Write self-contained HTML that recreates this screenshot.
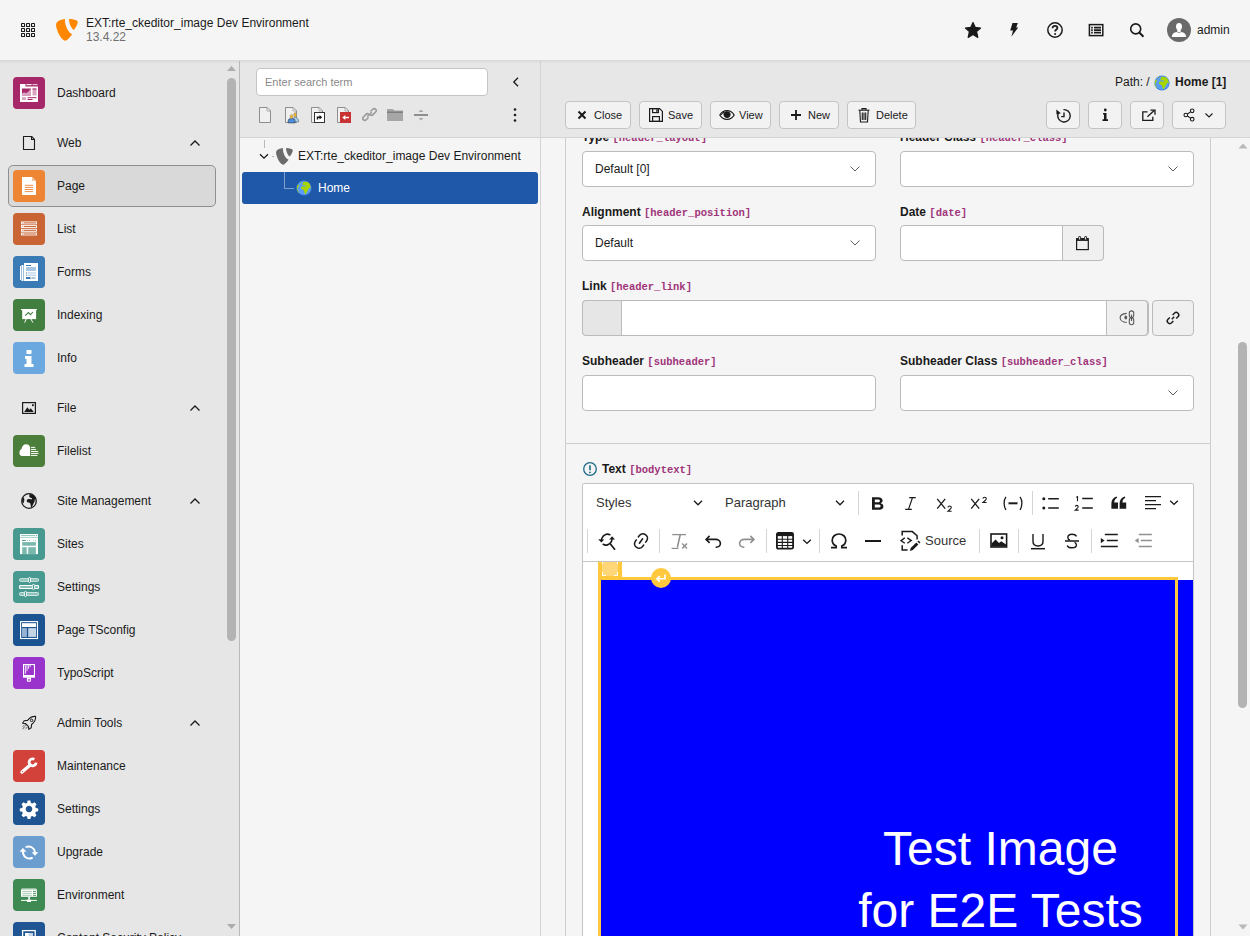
<!DOCTYPE html>
<html><head><meta charset="utf-8">
<style>
*{box-sizing:border-box;margin:0;padding:0}
html,body{width:1250px;height:936px;overflow:hidden;background:#f5f5f5;font-family:"Liberation Sans",sans-serif;font-size:12px;color:#1a1a1a}
.a{position:absolute}
svg{display:block}
/* topbar */
#top{left:0;top:0;width:1250px;height:61px;background:#f5f5f5;border-bottom:1px solid #d9d9d9;box-shadow:0 1px 2px rgba(0,0,0,.06);z-index:5}
/* sidebar */
#side{left:0;top:60px;width:240px;height:876px;background:#e6e6e6;border-right:1px solid #bababa;overflow:hidden}
.mi{position:absolute;left:13px;width:32px;height:32px;border-radius:5px}
.mt{position:absolute;left:57px;font-size:12px;color:#1a1a1a;line-height:14px}
.gi{position:absolute;left:21px;width:16px;height:16px}
.chev{position:absolute;left:189px;width:12px;height:8px}
/* tree */
#tree{left:240px;top:60px;width:301px;height:876px;background:#f5f5f5;border-right:1px solid #d4d4d4}
#treetb{left:0;top:0;width:300px;height:78px;background:#e7e7e7;border-bottom:1px solid #d4d4d4}
/* docheader */
#doch{left:541px;top:60px;width:709px;height:78px;background:#e7e7e7;border-bottom:1px solid #d4d4d4;z-index:3}
.btn{position:absolute;top:41px;height:28px;background:#f2f2f2;border:1px solid #c4c4c4;border-radius:4px;font-size:12px;line-height:26px;color:#1a1a1a}
/* content */

.lbl{position:absolute;font-weight:bold;font-size:12px;line-height:14px;white-space:nowrap}
.lbl code{font-family:"Liberation Mono",monospace;font-weight:bold;color:#a0347a;font-size:10.5px}
.inp{position:absolute;height:36px;background:#fff;border:1px solid #bbb;border-radius:4px}
</style></head>
<body>
<div id="top" class="a">
 <svg class="a" style="left:21px;top:23px" width="14" height="14" viewBox="0 0 14 14" fill="none" stroke="#1a1a1a" stroke-width="1.1"><rect x="0.55" y="0.55" width="3" height="3" rx=".4"/><rect x="5.55" y="0.55" width="3" height="3" rx=".4"/><rect x="10.55" y="0.55" width="3" height="3" rx=".4"/><rect x="0.55" y="5.55" width="3" height="3" rx=".4"/><rect x="5.55" y="5.55" width="3" height="3" rx=".4"/><rect x="10.55" y="5.55" width="3" height="3" rx=".4"/><rect x="0.55" y="10.55" width="3" height="3" rx=".4"/><rect x="5.55" y="10.55" width="3" height="3" rx=".4"/><rect x="10.55" y="10.55" width="3" height="3" rx=".4"/></svg>
 <svg class="a" style="left:56px;top:19px" width="22" height="22" viewBox="0 0 22 22">
  <path fill="#ff8700" d="M8.9 0 C5 0.6 2 1.8 0.8 3.6 C0 4.6 -0.1 6 0.2 7.5 C1.2 12.5 4.5 20 8.9 21.8 C10.6 21.6 13.6 19 16.3 15.2 C13.5 14.2 10.8 10.5 9.5 5.5 C9.1 4 8.9 2 8.9 0Z"/>
  <path fill="#ff8700" d="M13 0 L13.2 2.5 C13.6 5.5 15.6 9.6 17.8 11 C19.6 9 21.4 5.6 21.7 3.6 C21.8 2.2 21.2 1.6 20 1.2 C18 0.4 15.5 0 13 0Z"/>
 </svg>
 <div class="a" style="left:86px;top:16px;font-size:12px;line-height:14px;color:#1a1a1a;white-space:nowrap">EXT:rte_ckeditor_image Dev Environment</div>
 <div class="a" style="left:86px;top:30px;font-size:12px;line-height:14px;color:#707070">13.4.22</div>
 <svg class="a" style="left:964px;top:21px" width="18" height="18" viewBox="0 0 18 18"><path fill="#1a1a1a" stroke="#1a1a1a" stroke-width="1.2" stroke-linejoin="round" d="M9 1.6 L11.3 6.4 L16.6 7 L12.6 10.6 L13.8 16.4 L9 13.6 L4.2 16.4 L5.4 10.6 L1.4 7 L6.7 6.4Z"/></svg>
 <svg class="a" style="left:1008px;top:22px" width="12" height="16" viewBox="0 0 12 16"><path fill="#1a1a1a" d="M4.5 1 L9.8 1 L8.2 5.6 L10.2 5.6 L3.4 14.8 L5 8.4 L2.2 8.4Z"/></svg>
 <svg class="a" style="left:1047px;top:22px" width="16" height="16" viewBox="0 0 16 16" fill="none" stroke="#1a1a1a"><circle cx="8" cy="8" r="7.2" stroke-width="1.5"/><path d="M5.6 6.2 C5.6 4.6 6.7 3.8 8 3.8 C9.4 3.8 10.4 4.7 10.4 5.9 C10.4 7.5 8.1 7.6 8.1 9.6" stroke-width="1.8"/><circle cx="8.1" cy="11.9" r="1" fill="#1a1a1a" stroke="none"/></svg>
 <svg class="a" style="left:1088px;top:23px" width="16" height="14" viewBox="0 0 16 14" fill="none" stroke="#1a1a1a"><rect x="1.4" y="1.6" width="13.4" height="11" stroke-width="1.5"/><path d="M3.2 4.6h1.6M3.2 7.1h1.6M3.2 9.6h1.6M6 4.6h7M6 7.1h7M6 9.6h7" stroke-width="1.8"/></svg>
 <svg class="a" style="left:1129px;top:22px" width="16" height="16" viewBox="0 0 16 16" fill="none" stroke="#1a1a1a"><circle cx="6.7" cy="6.9" r="5" stroke-width="1.6"/><path d="M10.3 10.5 L14.5 14.7" stroke-width="2"/></svg>
 <svg class="a" style="left:1167px;top:18px" width="24" height="24" viewBox="0 0 24 24"><circle cx="12" cy="12" r="12" fill="#6a6a6a"/><ellipse cx="12" cy="8.6" rx="3" ry="3.7" fill="#fff"/><rect x="10.3" y="11" width="3.4" height="3" fill="#fff"/><path fill="#fff" d="M4.8 19 C5 16 6.8 14.6 9.6 14 C10.4 14.5 11.2 14.7 12 14.7 C12.8 14.7 13.6 14.5 14.4 14 C17.2 14.6 19 16 19.2 19Z"/></svg>
 <div class="a" style="left:1197px;top:23px;font-size:12px;line-height:14px;color:#1a1a1a">admin</div>
</div>
<div id="side" class="a">
<div class="a" style="left:8px;top:105px;width:208px;height:42px;background:#d9d9d9;border:1px solid #8f8f8f;border-radius:5px"></div>
<svg class="a" style="left:13px;top:17px" width="32" height="32" viewBox="0 0 32 32"><rect width="32" height="32" rx="4" fill="#a72869"/><rect x="7" y="9.5" width="18" height="15.5" fill="#fff"/><rect x="7" y="7" width="5.5" height="3" fill="#fff"/><rect x="13.5" y="7" width="5" height="1.2" fill="#fff"/><rect x="19.5" y="7" width="5" height="1.2" fill="#fff" opacity=".7"/><rect x="9" y="11.5" width="9" height="7" fill="#a72869"/><path d="M9 18.5 L9 16.5 L11 15.2 L13 16.2 L15.5 14.5 L18 11.5 L18 18.5Z" fill="#d9a3c0"/><rect x="19.5" y="11.5" width="4" height="7" fill="#d9a3c0"/><rect x="19.5" y="11.5" width="4" height="1" fill="#a72869"/><rect x="9" y="20.2" width="4" height="2.8" fill="#d9a3c0"/><rect x="14.5" y="20.2" width="9" height="1" fill="#a72869"/><rect x="14.5" y="22" width="5" height="1" fill="#a72869"/></svg>
<div class="a mt" style="top:17px;line-height:32px;white-space:nowrap">Dashboard</div>
<svg class="a" style="left:13px;top:110px" width="32" height="32" viewBox="0 0 32 32"><rect width="32" height="32" rx="4" fill="#ee8535"/><path d="M9 7 L19 7 L23 11 L23 25 L9 25Z" fill="#fff"/><path d="M19 7 L23 11 L19 11Z" fill="#f6c29a"/><path d="M11.8 15.3h8.4M11.8 17.4h8.4M11.8 19.5h8.4M11.8 21.6h8.4" stroke="#ee8535" stroke-width=".9"/></svg>
<div class="a mt" style="top:110px;line-height:32px;white-space:nowrap">Page</div>
<svg class="a" style="left:13px;top:153px" width="32" height="32" viewBox="0 0 32 32"><rect width="32" height="32" rx="4" fill="#c96434"/><g fill="none" stroke="#fff" stroke-width=".9"><rect x="8.5" y="8.9" width="15" height="2"/><rect x="8.5" y="12.6" width="15" height="2"/><rect x="8.5" y="16.3" width="15" height="2"/><rect x="8.5" y="20" width="15" height="2"/></g><path d="M9.5 9.9h1.3M9.5 13.6h1.3M9.5 17.3h1.3M9.5 21h1.3" stroke="#fff" stroke-width="1.1"/></svg>
<div class="a mt" style="top:153px;line-height:32px;white-space:nowrap">List</div>
<svg class="a" style="left:13px;top:196px" width="32" height="32" viewBox="0 0 32 32"><rect width="32" height="32" rx="4" fill="#3a7bb5"/><rect x="7" y="10" width="1" height="14" fill="#fff"/><rect x="8.5" y="9" width="2" height="16" fill="#fff"/><rect x="11" y="7" width="14" height="18" fill="#fff"/><rect x="13" y="9" width="5" height="1" fill="#3a7bb5"/><rect x="13" y="11" width="10" height="4" fill="#a8c5e1"/><rect x="13" y="16.5" width="1.2" height="1" fill="#3a7bb5"/><rect x="15" y="16.5" width="8" height="1" fill="#a8c5e1"/><rect x="13" y="18.7" width="1.2" height="1" fill="#3a7bb5"/><rect x="15" y="18.7" width="8" height="1" fill="#a8c5e1"/><rect x="13" y="21" width="4.5" height="2" fill="#3a7bb5"/><rect x="18.5" y="21" width="4" height="2" fill="#a8c5e1"/></svg>
<div class="a mt" style="top:196px;line-height:32px;white-space:nowrap">Forms</div>
<svg class="a" style="left:13px;top:239px" width="32" height="32" viewBox="0 0 32 32"><rect width="32" height="32" rx="4" fill="#417e3f"/><rect x="9.2" y="10" width="13.9" height="10.1" fill="#fff"/><rect x="7.9" y="10" width="16" height="1.1" fill="#fff"/><path d="M12.2 16.7 L15.4 13.6 L17.5 15.6 L19.9 13" stroke="#417e3f" stroke-width="1.1" fill="none"/><path d="M13.3 20 L11.6 23.6 M17.9 20 L19.9 23.6" stroke="#fff" stroke-width="1"/></svg>
<div class="a mt" style="top:239px;line-height:32px;white-space:nowrap">Indexing</div>
<svg class="a" style="left:13px;top:282px" width="32" height="32" viewBox="0 0 32 32"><rect width="32" height="32" rx="4" fill="#6ca8e0"/><rect x="13.5" y="8" width="5" height="4" rx=".5" fill="#fff"/><path d="M12 14 L18.5 14 L18.5 22 L20.5 22 L20.5 25 L11.5 25 L11.5 22 L13.5 22 L13.5 17 L12 17Z" fill="#fff"/></svg>
<div class="a mt" style="top:282px;line-height:32px;white-space:nowrap">Info</div>
<svg class="a" style="left:13px;top:375px" width="32" height="32" viewBox="0 0 32 32"><rect width="32" height="32" rx="4" fill="#4a7e3a"/><path d="M17.1 20.9 L9 20.9 C7.4 20.9 6.4 19.6 6.4 18 C6.4 16.4 7.3 14.6 8.5 14.1 C8.9 11.2 10.8 9.2 13.2 9.2 C15.6 9.2 17.1 10.8 17.1 13Z" fill="#fff"/><path d="M17.9 12.4h4.3M17.9 14.45h5.2M17.9 16.45h7.3M17.9 18.4h7.7M17.9 20.4h6.5" stroke="#fff" stroke-width="1"/></svg>
<div class="a mt" style="top:375px;line-height:32px;white-space:nowrap">Filelist</div>
<svg class="a" style="left:13px;top:468px" width="32" height="32" viewBox="0 0 32 32"><rect width="32" height="32" rx="4" fill="#48998f"/><rect x="7" y="6" width="18" height="20.1" fill="#fff"/><path d="M8.1 7.6h13.9" stroke="#8cc3ba" stroke-width="1"/><circle cx="23.5" cy="7.6" r=".7" fill="#48998f"/><rect x="7" y="9.3" width="18" height=".7" fill="#8cc3ba"/><path d="M9 12.4h3.8" stroke="#48998f" stroke-width="1"/><circle cx="14.5" cy="12.4" r=".5" fill="#8cc3ba"/><circle cx="16.5" cy="12.4" r=".5" fill="#8cc3ba"/><circle cx="20.5" cy="12.4" r=".5" fill="#8cc3ba"/><circle cx="22.5" cy="12.4" r=".5" fill="#8cc3ba"/><rect x="9.2" y="14.1" width="13.7" height="3.6" fill="#7ab8ae"/><rect x="9.2" y="19.2" width="4.5" height="6.9" fill="#7ab8ae"/><rect x="15.2" y="19.2" width="7.7" height="6.9" fill="#7ab8ae"/></svg>
<div class="a mt" style="top:468px;line-height:32px;white-space:nowrap">Sites</div>
<svg class="a" style="left:13px;top:511px" width="32" height="32" viewBox="0 0 32 32"><rect width="32" height="32" rx="4" fill="#48998f"/><g stroke="#fff" stroke-width=".9"><rect x="6.6" y="7.7" width="18.9" height="2.6" rx=".8" fill="#86c0b6" stroke="#e6f2f0"/><rect x="6.6" y="14.5" width="18.9" height="3" rx=".8" fill="#86c0b6" stroke-width="1.1"/><rect x="6.6" y="21.6" width="18.9" height="2.8" rx=".8" fill="#86c0b6" stroke="#e6f2f0"/><rect x="15.6" y="6.4" width="1.9" height="5" rx=".9" fill="#48998f"/><rect x="19.4" y="13.4" width="2.2" height="5" rx="1" fill="#48998f"/><rect x="11.5" y="20.5" width="2" height="5" rx=".9" fill="#48998f"/></g></svg>
<div class="a mt" style="top:511px;line-height:32px;white-space:nowrap">Settings</div>
<svg class="a" style="left:13px;top:554px" width="32" height="32" viewBox="0 0 32 32"><rect width="32" height="32" rx="4" fill="#1c5491"/><rect x="7.6" y="7.6" width="16.9" height="16.9" fill="none" stroke="#fff" stroke-width="1.1"/><rect x="9" y="9.2" width="14.1" height="3.8" fill="#fff"/><rect x="9" y="14.1" width="4.9" height="8.8" fill="#97b3d2"/><rect x="15.2" y="14.1" width="7.9" height="8.8" fill="#c5d5e6"/></svg>
<div class="a mt" style="top:554px;line-height:32px;white-space:nowrap">Page TSconfig</div>
<svg class="a" style="left:13px;top:597px" width="32" height="32" viewBox="0 0 32 32"><rect width="32" height="32" rx="4" fill="#9933cc"/><rect x="10" y="7" width="12" height="13.7" fill="#fff"/><rect x="11.1" y="8.1" width="9.8" height="9.9" fill="#9933cc"/><path d="M12.4 8.1 L12.4 16.8 M14 8.1 L14 14.2 M15.6 8.1 L15.6 11.8 M17.2 8.1 L17.2 10" stroke="#fff" stroke-width=".9" opacity=".95"/><path d="M13.9 20.7 L17.9 20.7 L17.9 23.8 C17.9 24.5 17.4 24.8 16.8 24.8 L15 24.8 C14.4 24.8 13.9 24.5 13.9 23.8Z" fill="#fff"/><rect x="15.2" y="22.1" width="1.6" height="1.6" fill="#9933cc"/></svg>
<div class="a mt" style="top:597px;line-height:32px;white-space:nowrap">TypoScript</div>
<svg class="a" style="left:13px;top:690px" width="32" height="32" viewBox="0 0 32 32"><rect width="32" height="32" rx="4" fill="#d2413a"/><path d="M23.1 12.6 A3.5 3.5 0 1 1 21.4 9.3" fill="none" stroke="#fff" stroke-width="2.8"/><path d="M17.2 14.9 L9 22.1" stroke="#fff" stroke-width="3.3" stroke-linecap="round"/><circle cx="9.6" cy="21.6" r=".65" fill="#d2413a"/></svg>
<div class="a mt" style="top:690px;line-height:32px;white-space:nowrap">Maintenance</div>
<svg class="a" style="left:13px;top:733px" width="32" height="32" viewBox="0 0 32 32"><rect width="32" height="32" rx="4" fill="#1f5592"/><path fill="#fff" fill-rule="evenodd" d="M14.6 7.5h2.8l.5 2.4 1.5.7 2.1-1.3 2 2-1.3 2.1.6 1.5 2.4.5v2.8l-2.4.5-.6 1.5 1.3 2.1-2 2-2.1-1.3-1.5.6-.5 2.4h-2.8l-.5-2.4-1.5-.6-2.1 1.3-2-2 1.3-2.1-.6-1.5-2.4-.5v-2.8l2.4-.5.6-1.5-1.3-2.1 2-2 2.1 1.3 1.5-.7Z M16 12.7 a3.3 3.3 0 1 0 0.01 0Z"/></svg>
<div class="a mt" style="top:733px;line-height:32px;white-space:nowrap">Settings</div>
<svg class="a" style="left:13px;top:776px" width="32" height="32" viewBox="0 0 32 32"><rect width="32" height="32" rx="4" fill="#6b9ecf"/><path d="M13.4 10.9 C16.8 9.8 21.2 11.2 22 16.2" fill="none" stroke="#fff" stroke-width="1.9" stroke-linecap="round"/><path d="M18.6 16.3 L25.4 16.3 L22 19.8Z" fill="#fff"/><path d="M19 22 C15.6 23.4 10.4 22 9.8 15.6" fill="none" stroke="#fff" stroke-width="1.9" stroke-linecap="round"/><path d="M6.5 15.8 L13.5 15.8 L9.9 12.1Z" fill="#fff"/></svg>
<div class="a mt" style="top:776px;line-height:32px;white-space:nowrap">Upgrade</div>
<svg class="a" style="left:13px;top:819px" width="32" height="32" viewBox="0 0 32 32"><rect width="32" height="32" rx="4" fill="#3f8a53"/><rect x="8.8" y="9.2" width="14.5" height="1.4" fill="#a9cdb1"/><rect x="8" y="10.4" width="15.9" height="7.4" fill="#fff"/><path d="M9.2 12.4h9.6M9.2 14.35h9.6M9.2 16.3h9.6" stroke="#9cc5a6" stroke-width=".9"/><path d="M20 12.4h3M20 14.35h3M20 16.3h3" stroke="#3f8a53" stroke-width=".9"/><rect x="15.3" y="17.8" width="1.6" height="2.8" fill="#fff"/><path d="M14 22.9 L14 21.2 C14 20.7 14.4 20.4 14.9 20.4 L17.2 20.4 C17.7 20.4 18.1 20.7 18.1 21.2 L18.1 22.9Z" fill="#fff"/><path d="M8 21.4h15.9" stroke="#fff" stroke-width="1"/></svg>
<div class="a mt" style="top:819px;line-height:32px;white-space:nowrap">Environment</div>
<svg class="a" style="left:13px;top:862px" width="32" height="32" viewBox="0 0 32 32"><rect width="32" height="32" rx="4" fill="#1f5592"/><rect x="9.6" y="8.6" width="12.6" height="14" fill="none" stroke="#fff" stroke-width="1.3"/><rect x="12" y="11" width="3.9" height="10" fill="#fff"/><rect x="15.9" y="11" width="4.1" height="10" fill="#c5d5e6"/></svg>
<div class="a mt" style="top:862px;line-height:32px;white-space:nowrap">Content Security Policy</div>
<svg class="a" style="left:21px;top:75px" width="16" height="16" viewBox="0 0 16 16"><path d="M2.5 1.5 L10.6 1.5 L13.5 4.4 L13.5 14.5 L2.5 14.5Z" fill="none" stroke="#1a1a1a" stroke-width="1.1" stroke-linejoin="round"/><path d="M10.5 1.6 L10.5 4.5 L13.4 4.5" fill="none" stroke="#1a1a1a" stroke-width="1.1" stroke-linejoin="round"/></svg>
<div class="a mt" style="top:67px;line-height:32px;white-space:nowrap">Web</div>
<svg class="a" style="left:189px;top:79px" width="12" height="8" viewBox="0 0 12 8"><path d="M1.5 6.5 L6 2 L10.5 6.5" fill="none" stroke="#1a1a1a" stroke-width="1.3"/></svg>
<svg class="a" style="left:21px;top:340px" width="16" height="16" viewBox="0 0 16 16"><rect x="1.6" y="2.6" width="12.8" height="10.8" fill="none" stroke="#1a1a1a" stroke-width="1.2"/><path d="M3.2 12 L6.3 7.3 L8.3 9.8 L9.8 8.3 L12.8 12Z" fill="#1a1a1a"/><rect x="11" y="4.3" width="1.8" height="1.8" fill="#1a1a1a"/></svg>
<div class="a mt" style="top:332px;line-height:32px;white-space:nowrap">File</div>
<svg class="a" style="left:189px;top:344px" width="12" height="8" viewBox="0 0 12 8"><path d="M1.5 6.5 L6 2 L10.5 6.5" fill="none" stroke="#1a1a1a" stroke-width="1.3"/></svg>
<svg class="a" style="left:21px;top:433px" width="16" height="16" viewBox="0 0 16 16"><circle cx="8" cy="8" r="7.3" fill="none" stroke="#1a1a1a" stroke-width="1.3"/><path fill="#1a1a1a" d="M8.6 1 C11 1.1 13 2.2 14.2 4 L13.6 8.4 L11.8 12 L10.4 15.2 L9.7 12.6 L9.4 10.4 L8 9.6 L6.2 9.3 L5.6 7.6 L7 6.1 L8.6 5.9 L10.6 6.5 L11 5.2 L9 4.6 L8.2 3.4 Z"/><path fill="#1a1a1a" d="M1.4 5.2 L2.9 4.4 L3.4 7 L2.6 10.2 L1.2 9.4Z"/></svg>
<div class="a mt" style="top:425px;line-height:32px;white-space:nowrap">Site Management</div>
<svg class="a" style="left:189px;top:437px" width="12" height="8" viewBox="0 0 12 8"><path d="M1.5 6.5 L6 2 L10.5 6.5" fill="none" stroke="#1a1a1a" stroke-width="1.3"/></svg>
<svg class="a" style="left:21px;top:655px" width="16" height="16" viewBox="0 0 16 16"><path d="M14.6 1.4 C11.2 1.2 8.5 2.8 6.5 5.4 L3.2 5.8 L1.6 8.2 L4.4 8.5 L7.5 11.6 L7.8 14.4 L10.2 12.8 L10.6 9.5 C13.2 7.5 14.8 4.8 14.6 1.4Z" fill="none" stroke="#1a1a1a" stroke-width="1.1" stroke-linejoin="round"/><circle cx="10.6" cy="5.4" r="1.2" fill="none" stroke="#1a1a1a" stroke-width="1"/><path d="M4.5 10.5 L1.5 14.5 M3.5 9.8 L1.8 11.6 M6.2 12.2 L4.4 14.2" stroke="#1a1a1a" stroke-width="1" stroke-dasharray="1 .8"/></svg>
<div class="a mt" style="top:647px;line-height:32px;white-space:nowrap">Admin Tools</div>
<svg class="a" style="left:189px;top:659px" width="12" height="8" viewBox="0 0 12 8"><path d="M1.5 6.5 L6 2 L10.5 6.5" fill="none" stroke="#1a1a1a" stroke-width="1.3"/></svg>
<svg class="a" style="left:226px;top:5px" width="11" height="7" viewBox="0 0 11 7"><path d="M1 6 L5.5 1 L10 6Z" fill="#acacac"/></svg>
<div class="a" style="left:227px;top:18px;width:9px;height:563px;background:#b3b3b3;border-radius:5px"></div>
<svg class="a" style="left:226px;top:863px" width="11" height="7" viewBox="0 0 11 7"><path d="M1 1 L5.5 6 L10 1Z" fill="#acacac"/></svg>
</div>
<div id="tree" class="a">
 <div id="treetb" class="a">
  <div class="a" style="left:16px;top:8px;width:232px;height:28px;background:#fff;border:1px solid #c4c4c4;border-radius:4px"></div>
  <div class="a" style="left:25px;top:15px;font-size:11px;line-height:14px;color:#8a8a8a">Enter search term</div>
  <svg class="a" style="left:270px;top:16px" width="12" height="12" viewBox="0 0 12 12"><path d="M8 1.8 L3.8 6 L8 10.2" fill="none" stroke="#1a1a1a" stroke-width="1.3"/></svg>
  <!-- toolbar icons -->
  <svg class="a" style="left:18px;top:46px" width="16" height="18" viewBox="0 0 16 18"><path d="M1.5 1.5 L9 1.5 L12.5 5 L12.5 16.5 L1.5 16.5Z" fill="#f0f0f0" stroke="#8e8e8e" stroke-width="1"/><path d="M9 1.5 L9 5 L12.5 5Z" fill="#fff" stroke="#8e8e8e" stroke-width=".7"/></svg>
  <svg class="a" style="left:44px;top:46px" width="16" height="18" viewBox="0 0 16 18"><path d="M1.5 1.5 L9 1.5 L12.5 5 L12.5 16.5 L1.5 16.5Z" fill="#f0f0f0" stroke="#8e8e8e" stroke-width="1"/><path d="M9 1.5 L9 5 L12.5 5Z" fill="#fff" stroke="#8e8e8e" stroke-width=".7"/><path d="M9.6 16.2 L9.6 12.6 C9.6 11.6 10.3 11.2 11.1 11.2 C12 11.2 13 11.6 13.4 12.6 L14.6 14.2 L14.6 15.8Z" fill="#a8d0f0" stroke="#555" stroke-width=".6"/><ellipse cx="11.1" cy="8.8" rx="1.4" ry="2.2" fill="#f2b632" stroke="#777" stroke-width=".4"/><path d="M4.2 16.9 L4.2 14.3 C4.2 13.2 5.4 12.6 7.5 12.6 C9.6 12.6 11 13.2 11 14.3 L11 16.9Z" fill="#4d8fe0" stroke="#333" stroke-width=".6"/><ellipse cx="7.5" cy="10.5" rx="1.5" ry="2.1" fill="#f2b632" stroke="#777" stroke-width=".4"/></svg>
  <svg class="a" style="left:70px;top:46px" width="16" height="18" viewBox="0 0 16 18"><path d="M1.5 1.5 L9 1.5 L12.5 5 L12.5 16.5 L1.5 16.5Z" fill="#f0f0f0" stroke="#8e8e8e" stroke-width="1"/><path d="M9 1.5 L9 5 L12.5 5Z" fill="#fff" stroke="#8e8e8e" stroke-width=".7"/><rect x="4.5" y="6.5" width="10" height="10" fill="#fff" stroke="#333" stroke-width="1"/><path d="M7.5 13.5 L7.5 11.2 L10 11.2" fill="none" stroke="#111" stroke-width="1.4"/><path d="M9.5 9 L12.2 11.2 L9.5 13.4Z" fill="#111"/></svg>
  <svg class="a" style="left:96px;top:46px" width="16" height="18" viewBox="0 0 16 18"><path d="M1.5 1.5 L9 1.5 L12.5 5 L12.5 16.5 L1.5 16.5Z" fill="#f0f0f0" stroke="#8e8e8e" stroke-width="1"/><path d="M9 1.5 L9 5 L12.5 5Z" fill="#fff" stroke="#8e8e8e" stroke-width=".7"/><rect x="4" y="6" width="11" height="11" fill="#c83232"/><path d="M13 11.5 L8.5 11.5" stroke="#fff" stroke-width="1.4"/><path d="M6.3 11.5 L9.3 9 L9.3 14Z" fill="#fff"/></svg>
  <svg class="a" style="left:122px;top:47px" width="15" height="15" viewBox="0 0 15 15" fill="none" stroke="#9a9a9a" stroke-width="1.6"><path d="M6.5 10.5 L4.2 12.8 C3.4 13.6 2.1 13.6 1.4 12.8 C0.6 12 0.6 10.8 1.4 10 L4 7.4 C4.8 6.6 6 6.6 6.8 7.4"/><path d="M8.5 4.5 L10.8 2.2 C11.6 1.4 12.9 1.4 13.6 2.2 C14.4 3 14.4 4.2 13.6 5 L11 7.6 C10.2 8.4 9 8.4 8.2 7.6"/><path d="M5.3 9.7 L9.7 5.3"/></svg>
  <svg class="a" style="left:146px;top:48px" width="18" height="14" viewBox="0 0 18 14"><path d="M1 1 L7 1 L8.5 2.5 L17 2.5 L17 13 L1 13Z" fill="#a6a6a6"/><path d="M1 3.5 L17 3.5 L17 5 L1 5Z" fill="#7e7e7e"/></svg>
  <svg class="a" style="left:173px;top:47px" width="16" height="16" viewBox="0 0 16 16"><path d="M1 8 L15 8" stroke="#7a7a7a" stroke-width="1.6"/><path d="M5.5 5 L8 2.5 L10.5 5Z M5.5 11 L8 13.5 L10.5 11Z" fill="#a8a8a8"/></svg>
  <svg class="a" style="left:272px;top:47px" width="6" height="16" viewBox="0 0 6 16"><circle cx="3" cy="2.5" r="1.3" fill="#1a1a1a"/><circle cx="3" cy="8" r="1.3" fill="#1a1a1a"/><circle cx="3" cy="13.5" r="1.3" fill="#1a1a1a"/></svg>
 </div>
 <div class="a" style="left:24px;top:80px;width:1px;height:8px;background:#b8b8b8"></div>
 <svg class="a" style="left:19px;top:93px" width="10" height="7" viewBox="0 0 10 7"><path d="M1 1.2 L5 5.2 L9 1.2" fill="none" stroke="#1a1a1a" stroke-width="1.3"/></svg>
 <div class="a" style="left:32px;top:96px;width:2px;height:1px;background:#b8b8b8"></div>
 <svg class="a" style="left:36px;top:88px" width="17" height="17" viewBox="0 0 22 22">
  <path fill="#6b6b6b" d="M8.9 0 C5 0.6 2 1.8 0.8 3.6 C0 4.6 -0.1 6 0.2 7.5 C1.2 12.5 4.5 20 8.9 21.8 C10.6 21.6 13.6 19 16.3 15.2 C13.5 14.2 10.8 10.5 9.5 5.5 C9.1 4 8.9 2 8.9 0Z"/>
  <path fill="#6b6b6b" d="M13 0 L13.2 2.5 C13.6 5.5 15.6 9.6 17.8 11 C19.6 9 21.4 5.6 21.7 3.6 C21.8 2.2 21.2 1.6 20 1.2 C18 0.4 15.5 0 13 0Z"/>
 </svg>
 <div class="a" style="left:58px;top:89px;font-size:12px;line-height:14px;color:#1a1a1a;white-space:nowrap">EXT:rte_ckeditor_image Dev Environment</div>
 <div class="a" style="left:2px;top:112px;width:296px;height:32px;background:#1f58a8;border-radius:3px"></div>
 <div class="a" style="left:44px;top:112px;width:1px;height:17px;background:#7f9fcf"></div>
 <div class="a" style="left:44px;top:128px;width:10px;height:1px;background:#7f9fcf"></div>
 <svg class="a" style="left:56px;top:120px" width="16" height="16" viewBox="0 0 16 16"><circle cx="8" cy="8" r="7.6" fill="#3b7ee0"/><circle cx="8" cy="8" r="6.8" fill="#5a9cf8"/><path fill="#a8d400" d="M7.4 1.8 C9.5 1.4 11.5 1.8 12.8 2.8 C14 3.8 14.6 5.5 14.7 8.8 L13.3 7.6 L12 10 L11.2 11.4 L10.2 13.5 L9.3 14.6 L8.4 12.5 L7.9 10.3 L6.6 9.8 L5 8.8 L5 7.2 L6.5 6.2 L8.2 6.6 L9.8 6.4 L9.8 5.4 L6.7 5.3 L6.4 4.6 Z M1 5.8 L2.6 4.2 L2.9 5.8 L1.9 7.5 L1.3 9.4 L2.2 11.2 L3.4 12.4 L2.3 12.6 L0.8 9.6Z"/><circle cx="4.4" cy="2.6" r=".6" fill="#a8d400"/></svg>
 
 <div class="a" style="left:78px;top:121px;font-size:12px;line-height:14px;color:#fff">Home</div>
</div>
<div id="doch" class="a">
 <div class="a" style="left:574px;top:15px;font-size:12px;line-height:14px;white-space:nowrap;color:#1a1a1a">Path: /</div>
 <svg class="a" style="left:613px;top:15px" width="16" height="16" viewBox="0 0 16 16"><circle cx="8" cy="8" r="7.6" fill="#3b7ee0"/><circle cx="8" cy="8" r="6.8" fill="#5a9cf8"/><path fill="#a8d400" d="M7.4 1.8 C9.5 1.4 11.5 1.8 12.8 2.8 C14 3.8 14.6 5.5 14.7 8.8 L13.3 7.6 L12 10 L11.2 11.4 L10.2 13.5 L9.3 14.6 L8.4 12.5 L7.9 10.3 L6.6 9.8 L5 8.8 L5 7.2 L6.5 6.2 L8.2 6.6 L9.8 6.4 L9.8 5.4 L6.7 5.3 L6.4 4.6 Z M1 5.8 L2.6 4.2 L2.9 5.8 L1.9 7.5 L1.3 9.4 L2.2 11.2 L3.4 12.4 L2.3 12.6 L0.8 9.6Z"/><circle cx="4.4" cy="2.6" r=".6" fill="#a8d400"/></svg>
 <div class="a" style="left:634px;top:15px;font-size:12px;line-height:14px;font-weight:bold;white-space:nowrap;color:#1a1a1a">Home [1]</div>

 <div class="btn" style="left:24px;width:66px"><svg class="a" style="left:8px;top:5px" width="16" height="16" viewBox="0 0 16 16"><path d="M4.5 4.5 L11.5 11.5 M11.5 4.5 L4.5 11.5" stroke="#1a1a1a" stroke-width="2"/></svg><span class="a" style="left:28px;top:0;font-size:11px">Close</span></div>
 <div class="btn" style="left:98px;width:63px"><svg class="a" style="left:8px;top:5px" width="16" height="16" viewBox="0 0 16 16" fill="none" stroke="#1a1a1a" stroke-width="1.2"><path d="M2.6 1.6 L11.6 1.6 L14.4 4.4 L14.4 14.4 L1.6 14.4 L1.6 1.6Z"/><rect x="4.6" y="1.6" width="5.8" height="4" /><rect x="4.6" y="9.6" width="6.8" height="4.8"/><rect x="8.2" y="2.4" width="1.4" height="2.4" fill="#1a1a1a" stroke="none"/></svg><span class="a" style="left:28px;top:0;font-size:11px">Save</span></div>
 <div class="btn" style="left:169px;width:61px"><svg class="a" style="left:8px;top:5px" width="16" height="16" viewBox="0 0 16 16"><path d="M0.8 8 C2.4 5.2 5 3.6 8 3.6 C11 3.6 13.6 5.2 15.2 8 C13.6 10.8 11 12.4 8 12.4 C5 12.4 2.4 10.8 0.8 8Z" fill="none" stroke="#1a1a1a" stroke-width="1.2"/><path d="M4.5 6.2 C5.5 4.6 6.8 4.2 8 4.2 C10.2 4.2 11.6 5.6 11.6 7.6 C11.6 9.6 10 11 8 11 C6 11 4.5 9.5 4.5 7.6Z" fill="#1a1a1a"/><path d="M2.2 8 C3 6.6 4 5.6 5.2 5" fill="none" stroke="#1a1a1a" stroke-width="1"/></svg><span class="a" style="left:28px;top:0;font-size:11px">View</span></div>
 <div class="btn" style="left:238px;width:60px"><svg class="a" style="left:8px;top:5px" width="16" height="16" viewBox="0 0 16 16"><path d="M8 3 L8 13 M3 8 L13 8" stroke="#1a1a1a" stroke-width="1.8"/></svg><span class="a" style="left:28px;top:0;font-size:11px">New</span></div>
 <div class="btn" style="left:306px;width:69px"><svg class="a" style="left:8px;top:5px" width="16" height="16" viewBox="0 0 16 16" fill="none" stroke="#1a1a1a" stroke-width="1.1"><path d="M2.5 3.2 L13.5 3.2"/><path d="M6 3 L6 1.6 L10 1.6 L10 3"/><path d="M3.8 3.5 L4.5 15 L11.5 15 L12.2 3.5"/><path d="M6.3 5.5 L6.3 13 M8 5.5 L8 13 M9.7 5.5 L9.7 13"/></svg><span class="a" style="left:28px;top:0;font-size:11px">Delete</span></div>

 <div class="btn" style="left:505px;width:34px"><svg class="a" style="left:8px;top:5px" width="16" height="16" viewBox="0 0 16 16" fill="none" stroke="#1a1a1a" stroke-width="1.4"><path d="M8.46 2.62 A6.2 6.2 0 1 1 3.2 6.6"/><path d="M1.3 2.4 L1.5 7.6 L5.9 6.2Z" fill="#1a1a1a" stroke="none"/><path d="M9 5.4 L9 9.6 L6.2 9.6"/></svg></div>
 <div class="btn" style="left:547px;width:34px"><svg class="a" style="left:8px;top:5px" width="16" height="16" viewBox="0 0 16 16"><circle cx="8.3" cy="3" r="1.4" fill="#1a1a1a"/><path d="M6 6 L9.5 6 L9.5 12.2 L11 12.2 L11 14 L5.5 14 L5.5 12.2 L7 12.2 L7 7.6 L6 7.6Z" fill="#1a1a1a"/></svg></div>
 <div class="btn" style="left:589px;width:34px"><svg class="a" style="left:9px;top:5px" width="16" height="16" viewBox="0 0 16 16" fill="none" stroke="#1a1a1a" stroke-width="1.3"><path d="M7.6 4.8 L2.8 4.8 L2.8 13.3 L12.8 13.3 L12.8 9.8"/><path d="M7.4 9.8 L14.2 3.6"/><path d="M10.4 3.2 L15 3.2 L15 7.8" stroke-width="1.3"/></svg></div>
 <div class="btn" style="left:631px;width:54px"><svg class="a" style="left:8px;top:5px" width="16" height="16" viewBox="0 0 16 16" fill="none" stroke="#1a1a1a" stroke-width="1.1"><circle cx="11.2" cy="3.8" r="1.8"/><circle cx="4.8" cy="8" r="1.8"/><circle cx="11.2" cy="12.2" r="1.8"/><path d="M6.4 7 L9.6 4.9 M6.4 9 L9.6 11.1"/></svg><svg class="a" style="left:28px;top:5px" width="16" height="16" viewBox="0 0 16 16"><path d="M4.5 6.5 L8 10 L11.5 6.5" fill="none" stroke="#1a1a1a" stroke-width="1.1"/></svg></div>
</div>
<div id="content">
<div class="a" style="left:565px;top:137px;width:1px;height:799px;background:#cdcdcd"></div>
<div class="a" style="left:1210px;top:137px;width:1px;height:799px;background:#cdcdcd"></div>
<div class="a" style="left:566px;top:443px;width:644px;height:1px;background:#cdcdcd"></div>
<div class="lbl" style="left:582px;top:130px">Type <code>[header_layout]</code></div>
<div class="lbl" style="left:900px;top:130px">Header Class <code>[header_class]</code></div>
<div class="inp" style="left:582px;top:151px;width:294px"></div>
<div class="a" style="left:595px;top:162px;line-height:14px">Default [0]</div>
<svg class="a" style="left:849px;top:165px" width="12" height="8" viewBox="0 0 12 8"><path d="M1.5 1.5 L6 6 L10.5 1.5" fill="none" stroke="#5c5c5c" stroke-width="1"/></svg>
<div class="inp" style="left:900px;top:151px;width:294px"></div>
<svg class="a" style="left:1167px;top:165px" width="12" height="8" viewBox="0 0 12 8"><path d="M1.5 1.5 L6 6 L10.5 1.5" fill="none" stroke="#5c5c5c" stroke-width="1"/></svg>
<div class="lbl" style="left:582px;top:205px">Alignment <code>[header_position]</code></div>
<div class="lbl" style="left:900px;top:205px">Date <code>[date]</code></div>
<div class="inp" style="left:582px;top:225px;width:294px"></div>
<div class="a" style="left:595px;top:236px;line-height:14px">Default</div>
<svg class="a" style="left:849px;top:239px" width="12" height="8" viewBox="0 0 12 8"><path d="M1.5 1.5 L6 6 L10.5 1.5" fill="none" stroke="#5c5c5c" stroke-width="1"/></svg>
<div class="inp" style="left:900px;top:225px;width:204px"></div>
<div class="a" style="left:1062px;top:225px;width:42px;height:36px;background:#f0f0f0;border:1px solid #bbb;border-radius:0 4px 4px 0"></div>
<svg class="a" style="left:1075px;top:234px" width="15" height="17" viewBox="0 0 15 17"><rect x="1.6" y="4.7" width="11.7" height="10.9" fill="none" stroke="#1a1a1a" stroke-width="1.2"/><rect x="1.6" y="4.7" width="11.7" height="2.2" fill="#1a1a1a"/><rect x="3.7" y="2.5" width="1.9" height="3.4" rx=".5" fill="#fff" stroke="#1a1a1a" stroke-width=".9"/><rect x="9.7" y="2.5" width="1.9" height="3.4" rx=".5" fill="#fff" stroke="#1a1a1a" stroke-width=".9"/></svg>
<div class="lbl" style="left:582px;top:279px">Link <code>[header_link]</code></div>
<div class="inp" style="left:582px;top:300px;width:567px"></div>
<div class="a" style="left:582px;top:300px;width:40px;height:36px;background:#e6e6e6;border:1px solid #bbb;border-radius:4px 0 0 4px"></div>
<div class="a" style="left:1106px;top:300px;width:42px;height:36px;background:#f0f0f0;border:1px solid #bbb;border-radius:0 4px 4px 0"></div>
<svg class="a" style="left:1119px;top:310px" width="16" height="16" viewBox="0 0 16 16" fill="none" stroke="#5a5a5a" stroke-width="1.1"><path d="M7.7 3.4 C3.5 3.8 1.1 5.8 1.1 7.8 C1.1 10 3.6 12.2 7.7 12.5"/><ellipse cx="6.8" cy="7.5" rx="1.4" ry="1.9" fill="#5a5a5a" stroke="none"/><rect x="10.3" y="0.9" width="4.4" height="6.8" rx="2.2"/><rect x="10.3" y="7.7" width="4.4" height="7.1" rx="2.2"/><path d="M12.5 4.6 L12.5 11" stroke-width="1.2"/></svg>
<div class="a" style="left:1152px;top:300px;width:42px;height:36px;background:#f0f0f0;border:1px solid #bbb;border-radius:4px"></div>
<svg class="a" style="left:1165px;top:310px" width="16" height="16" viewBox="0 0 16 16" fill="none" stroke="#1a1a1a" stroke-width="1.4"><path d="M6.8 9.2 L9.2 6.8"/><path d="M7.6 5 L9.4 3.2 C10.4 2.2 12 2.2 13 3.2 C14 4.2 14 5.8 13 6.8 L11.2 8.6"/><path d="M8.4 11 L6.6 12.8 C5.6 13.8 4 13.8 3 12.8 C2 11.8 2 10.2 3 9.2 L4.8 7.4"/></svg>
<div class="lbl" style="left:582px;top:354px">Subheader <code>[subheader]</code></div>
<div class="lbl" style="left:900px;top:354px">Subheader Class <code>[subheader_class]</code></div>
<div class="inp" style="left:582px;top:375px;width:294px"></div>
<div class="inp" style="left:900px;top:375px;width:294px"></div>
<svg class="a" style="left:1167px;top:389px" width="12" height="8" viewBox="0 0 12 8"><path d="M1.5 1.5 L6 6 L10.5 1.5" fill="none" stroke="#5c5c5c" stroke-width="1"/></svg>
<svg class="a" style="left:582px;top:461px" width="16" height="16" viewBox="0 0 16 16"><circle cx="8" cy="8" r="6.3" fill="none" stroke="#1d6a86" stroke-width="1.3"/><path d="M8 4.3 L8 9.3" stroke="#1d6a86" stroke-width="1.6"/><circle cx="8" cy="11.4" r=".9" fill="#1d6a86"/></svg>
<div class="lbl" style="left:602px;top:462px">Text <code>[bodytext]</code></div>
</div>
<div class="a" style="left:582px;top:483px;width:612px;height:460px;background:#fff;border:1px solid #c4c4c4;border-radius:2px"></div>
<div class="a" style="left:583px;top:561px;width:610px;height:1px;background:#c4c4c4"></div>
<div class="a" style="left:583px;top:562px;width:610px;height:374px;overflow:hidden">
 <div class="a" style="left:18px;top:18px;width:700px;height:500px;background:#0000fe"></div>
 <div class="a" style="left:15px;top:15px;width:580px;height:500px;border:3px solid #ffc83d"></div>
 <div class="a" style="left:15px;top:-2px;width:24px;height:20px;background:#ffc83d"></div>
 <div class="a" style="left:19px;top:-2px;width:16px;height:16px;background:#ffd778"></div>
 <svg class="a" style="left:19px;top:-2px" width="16" height="16" viewBox="0 0 16 16" fill="none" stroke="#fff" stroke-width="1"><path d="M0.5 4 L0.5 0.5 L4 0.5 M12 0.5 L15.5 0.5 L15.5 4 M15.5 12 L15.5 15.5 L12 15.5 M4 15.5 L0.5 15.5 L0.5 12"/></svg>
 <svg class="a" style="left:68px;top:6px" width="20" height="20" viewBox="0 0 20 20"><circle cx="10" cy="10" r="10" fill="#ffc83d"/><path d="M14 6.5 L14 10.8 L6.8 10.8" fill="none" stroke="#fff" stroke-width="1.6"/><path d="M8.8 8 L5.8 10.8 L8.8 13.6" fill="none" stroke="#fff" stroke-width="1.6"/></svg>
 <div class="a" style="left:200px;top:256px;width:435px;text-align:center;color:#fff;font-size:48px;line-height:61.5px;white-space:nowrap">Test Image<br>for E2E Tests</div>
</div>
<div class="a" style="left:596px;top:495px;font-size:13px;line-height:15px;color:#333">Styles</div>
<svg class="a" style="left:692px;top:499px" width="12" height="8" viewBox="0 0 12 8"><path d="M2 1.8 L6 5.8 L10 1.8" fill="none" stroke="#1a1a1a" stroke-width="1.3"/></svg>
<div class="a" style="left:725px;top:495px;font-size:13px;line-height:15px;color:#333">Paragraph</div>
<svg class="a" style="left:834px;top:499px" width="12" height="8" viewBox="0 0 12 8"><path d="M2 1.8 L6 5.8 L10 1.8" fill="none" stroke="#1a1a1a" stroke-width="1.3"/></svg>
<div class="a" style="left:858px;top:491px;width:1px;height:24px;background:#d4d4d4"></div>
<svg class="a" style="left:871px;top:497px" width="14" height="13" viewBox="0 0 14 13"><path fill="#1a1a1a" d="M1 0.3 L7.2 0.3 C10 0.3 11.6 1.6 11.6 3.6 C11.6 5 10.8 5.9 9.6 6.3 C11.2 6.7 12.4 7.8 12.4 9.5 C12.4 11.6 10.7 12.8 7.8 12.8 L1 12.8Z M3.8 2.6 L3.8 5.3 L6.8 5.3 C8.2 5.3 8.9 4.8 8.9 3.9 C8.9 3 8.2 2.6 6.8 2.6Z M3.8 7.5 L3.8 10.5 L7.1 10.5 C8.7 10.5 9.6 10 9.6 9 C9.6 8 8.7 7.5 7.1 7.5Z"/></svg>
<svg class="a" style="left:904px;top:497px" width="13" height="13" viewBox="0 0 13 13"><path d="M5.2 0.6 L11.8 0.6 M1.2 12.4 L7.8 12.4 M8.5 0.6 L4.5 12.4" fill="none" stroke="#1a1a1a" stroke-width="1.2"/></svg>
<svg class="a" style="left:936px;top:497px" width="19" height="16" viewBox="0 0 19 16"><path d="M1.2 1.8 L9.2 11.6 M9.2 1.8 L1.2 11.6" stroke="#1a1a1a" stroke-width="1.3"/><path d="M11.9 10.4 C12 9.5 12.7 9 13.6 9 C14.6 9 15.3 9.6 15.3 10.5 C15.3 11.6 14.2 12.2 11.9 14.3 L15.6 14.3" fill="none" stroke="#1a1a1a" stroke-width="1.1"/></svg>
<svg class="a" style="left:970px;top:496px" width="19" height="16" viewBox="0 0 19 16"><path d="M1.2 2.8 L9.2 12.6 M9.2 2.8 L1.2 12.6" stroke="#1a1a1a" stroke-width="1.3"/><path d="M12.9 2.6 C13 1.7 13.7 1.2 14.6 1.2 C15.6 1.2 16.3 1.8 16.3 2.7 C16.3 3.8 15.2 4.4 12.9 6.5 L16.6 6.5" fill="none" stroke="#1a1a1a" stroke-width="1.1"/></svg>
<svg class="a" style="left:1003px;top:496px" width="20" height="15" viewBox="0 0 20 15"><path d="M3 0.8 C0.5 4 0.5 10.5 3 13.8 M17 0.8 C19.5 4 19.5 10.5 17 13.8" fill="none" stroke="#1a1a1a" stroke-width="1.3"/><path d="M5.5 7.3 L14.5 7.3" stroke="#1a1a1a" stroke-width="2"/></svg>
<div class="a" style="left:1032px;top:491px;width:1px;height:24px;background:#d4d4d4"></div>
<svg class="a" style="left:1042px;top:497px" width="18" height="13" viewBox="0 0 18 13"><circle cx="1.8" cy="1.8" r="1.5" fill="#1a1a1a"/><circle cx="1.8" cy="11" r="1.5" fill="#1a1a1a"/><path d="M6.2 1.8 L16.8 1.8 M6.2 11 L16.8 11" stroke="#1a1a1a" stroke-width="1.5"/></svg>
<svg class="a" style="left:1074px;top:496px" width="19" height="16" viewBox="0 0 19 16"><path d="M2.2 1.4 L3.5 0.6 L3.5 5.2" fill="none" stroke="#1a1a1a" stroke-width="1.1"/><path d="M1.3 10.6 C1.4 9.8 2 9.4 2.8 9.4 C3.6 9.4 4.2 9.9 4.2 10.7 C4.2 11.6 3.2 12.2 1.3 14.1 L4.6 14.1" fill="none" stroke="#1a1a1a" stroke-width="1.1"/><path d="M8.2 2.6 L18.8 2.6 M8.2 12 L18.8 12" stroke="#1a1a1a" stroke-width="1.5"/></svg>
<svg class="a" style="left:1111px;top:496px" width="16" height="13" viewBox="0 0 16 13"><path fill="#1a1a1a" d="M0.4 7.2 C0.4 3.8 2.4 1.2 5.6 0.4 L6.2 1.8 C4.4 2.6 3.4 4 3.2 6.4 L7 6.4 L7 12.8 L0.4 12.8Z M8.6 7.2 C8.6 3.8 10.6 1.2 13.8 0.4 L14.4 1.8 C12.6 2.6 11.6 4 11.4 6.4 L15.2 6.4 L15.2 12.8 L8.6 12.8Z"/></svg>
<svg class="a" style="left:1144px;top:495px" width="18" height="15" viewBox="0 0 18 15"><path d="M1 1.6 L17 1.6 M1 5.6 L12 5.6 M1 9.6 L17 9.6 M1 13.6 L12 13.6" stroke="#1a1a1a" stroke-width="1.4"/></svg>
<svg class="a" style="left:1169px;top:499px" width="10" height="8" viewBox="0 0 10 8"><path d="M1.2 1.8 L5 5.4 L8.8 1.8" fill="none" stroke="#1a1a1a" stroke-width="1.4"/></svg>
<div class="a" style="left:587px;top:529px;width:1px;height:24px;background:#d4d4d4"></div>
<svg class="a" style="left:597px;top:530px" width="20" height="20" viewBox="0 0 20 20"><path d="M12.9 4.7 C10.4 3.4 6.6 4.3 5 8 L4.6 9.4" fill="none" stroke="#1a1a1a" stroke-width="1.6" stroke-linecap="round"/><path d="M1.2 9.2 L4.3 12.6 L7.3 9.6Z" fill="#1a1a1a"/><path d="M6.2 14.3 C8.6 15.8 12.6 15.2 14.4 11.6 L15 9.4" fill="none" stroke="#1a1a1a" stroke-width="1.6" stroke-linecap="round"/><path d="M12.2 9.6 L15.1 6.2 L18 9.4Z" fill="#1a1a1a"/><path d="M13.6 14.2 L17.6 19.2" stroke="#1a1a1a" stroke-width="1.7" stroke-linecap="round"/></svg>
<svg class="a" style="left:631px;top:531px" width="20" height="20" viewBox="0 0 20 20"><path fill="#1a1a1a" d="M11.077 15l.991-1.416a.75.75 0 1 1 1.229.86l-1.148 1.64a.748.748 0 0 1-.217.206 5.251 5.251 0 0 1-8.503-5.955.741.741 0 0 1 .12-.274l1.147-1.639a.75.75 0 1 1 1.228.86L4.933 10.7l.006.003a3.75 3.75 0 0 0 6.132 4.294l.006.004zm5.494-5.335a.748.748 0 0 1-.12.274l-1.147 1.639a.75.75 0 1 1-1.228-.86l.86-1.23a3.75 3.75 0 0 0-6.144-4.301l-.86 1.229a.75.75 0 0 1-1.229-.86l1.148-1.64a.748.748 0 0 1 .217-.206 5.251 5.251 0 0 1 8.503 5.955zm-4.563-2.532a.75.75 0 0 1 .184 1.045l-3.155 4.505a.75.75 0 1 1-1.229-.86l3.155-4.506a.75.75 0 0 1 1.045-.184z"/></svg>
<div class="a" style="left:659px;top:529px;width:1px;height:24px;background:#d4d4d4"></div>
<svg class="a" style="left:670px;top:533px" width="19" height="17" viewBox="0 0 19 17"><path d="M2.2 1.6 L16 1.6" fill="none" stroke="#8f8f8f" stroke-width="1.3"/><path d="M10.2 1.6 L7.4 14.4" fill="none" stroke="#8f8f8f" stroke-width="1.6"/><path d="M1.6 15.4 L8.6 15.4" stroke="#8f8f8f" stroke-width="1.2"/><path d="M12.2 10.6 L17 15.6 M17 10.6 L12.2 15.6" stroke="#8f8f8f" stroke-width="1.5"/></svg>
<svg class="a" style="left:704px;top:535px" width="18" height="13" viewBox="0 0 18 13"><path d="M2.2 4.4 L11.6 4.4 C14.4 4.4 16.4 6.4 16.4 8.6 C16.4 10.8 14.4 12.2 12.4 12.2 L11.6 12.2" fill="none" stroke="#1a1a1a" stroke-width="1.6"/><path d="M5.6 0.9 L2.1 4.4 L5.6 7.9" fill="none" stroke="#1a1a1a" stroke-width="1.6"/></svg>
<svg class="a" style="left:738px;top:535px" width="18" height="13" viewBox="0 0 18 13"><path d="M15.8 4.4 L6.4 4.4 C3.6 4.4 1.6 6.4 1.6 8.6 C1.6 10.8 3.6 12.2 5.6 12.2 L6.4 12.2" fill="none" stroke="#8f8f8f" stroke-width="1.6"/><path d="M12.4 0.9 L15.9 4.4 L12.4 7.9" fill="none" stroke="#8f8f8f" stroke-width="1.6"/></svg>
<div class="a" style="left:766px;top:529px;width:1px;height:24px;background:#d4d4d4"></div>
<svg class="a" style="left:776px;top:532px" width="18" height="18" viewBox="0 0 18 18"><rect x="0.9" y="0.9" width="16.2" height="15.8" rx="1.5" fill="none" stroke="#1a1a1a" stroke-width="1.8"/><rect x="0.9" y="0.9" width="16.2" height="3.2" fill="#1a1a1a"/><path d="M6.3 4 L6.3 16.5 M11.7 4 L11.7 16.5 M1 7.3 L17 7.3 M1 10.4 L17 10.4 M1 13.5 L17 13.5" stroke="#1a1a1a" stroke-width="1.1"/></svg>
<svg class="a" style="left:802px;top:538px" width="10" height="8" viewBox="0 0 10 8"><path d="M1.2 1.8 L5 5.4 L8.8 1.8" fill="none" stroke="#1a1a1a" stroke-width="1.4"/></svg>
<div class="a" style="left:819px;top:529px;width:1px;height:24px;background:#d4d4d4"></div>
<svg class="a" style="left:830px;top:533px" width="18" height="16" viewBox="0 0 18 16"><path d="M1 14.6 L6.2 14.6 L6.2 13 C3.6 11.8 2.2 9.6 2.2 7.2 C2.2 3.6 5.2 1 9 1 C12.8 1 15.8 3.6 15.8 7.2 C15.8 9.6 14.4 11.8 11.8 13 L11.8 14.6 L17 14.6" fill="none" stroke="#1a1a1a" stroke-width="1.7"/></svg>
<svg class="a" style="left:864px;top:539px" width="18" height="4" viewBox="0 0 18 4"><path d="M1 2 L17 2" stroke="#1a1a1a" stroke-width="2"/></svg>
<svg class="a" style="left:900px;top:530px" width="21" height="22" viewBox="0 0 21 22"><path d="M2.2 5.6 L2.2 1.6 L12.3 1.6 L17.1 5.8 L17.1 9.6 M2.2 15.2 L2.2 19.9 L7.6 19.9" fill="none" stroke="#1a1a1a" stroke-width="1.5"/><path d="M4.8 7.9 L0.9 10.6 L4.8 13.3 M7.3 7.9 L11.3 10.6 L7.3 13.3" fill="none" stroke="#1a1a1a" stroke-width="1.3"/><path d="M9.9 20.9 L10.7 18 L16.3 12.4 L18.4 14.5 L12.8 20.1Z" fill="#1a1a1a"/><path d="M17.4 11.5 L18.5 10.4 L20.5 12.4 L19.4 13.5Z" fill="#1a1a1a"/></svg>
<div class="a" style="left:925px;top:533px;font-size:13px;line-height:15px;color:#333">Source</div>
<div class="a" style="left:979px;top:529px;width:1px;height:24px;background:#d4d4d4"></div>
<svg class="a" style="left:990px;top:533px" width="18" height="15" viewBox="0 0 18 15"><rect x="1" y="1" width="15.6" height="13" fill="none" stroke="#1a1a1a" stroke-width="1.6"/><path d="M1.5 13.5 L1.5 10.5 L5.6 6.6 L9 10 L11.2 8.2 L16 11.6 L16 13.5Z" fill="#1a1a1a"/><circle cx="12" cy="4.8" r="1.5" fill="#1a1a1a"/></svg>
<div class="a" style="left:1018px;top:529px;width:1px;height:24px;background:#d4d4d4"></div>
<svg class="a" style="left:1030px;top:533px" width="16" height="17" viewBox="0 0 16 17"><path d="M3 1 L3 8.6 C3 11.4 5 13 8 13 C11 13 13 11.4 13 8.6 L13 1" fill="none" stroke="#1a1a1a" stroke-width="1.4"/><path d="M1 15.7 L15 15.7" stroke="#1a1a1a" stroke-width="1.5"/></svg>
<svg class="a" style="left:1064px;top:533px" width="16" height="16" viewBox="0 0 16 16"><path d="M12.6 3.4 C11.8 2 10.2 1.3 8 1.3 C5.4 1.3 3.8 2.6 3.8 4.4 C3.8 5.8 4.6 6.6 6 7.2 M10.6 9.4 C11.8 10 12.4 10.9 12.4 12 C12.4 13.8 10.6 14.8 8 14.8 C5.6 14.8 3.8 13.9 3.2 12.4" fill="none" stroke="#1a1a1a" stroke-width="1.4"/><path d="M1 8 L15 8" stroke="#1a1a1a" stroke-width="1.5"/></svg>
<div class="a" style="left:1091px;top:529px;width:1px;height:24px;background:#d4d4d4"></div>
<svg class="a" style="left:1100px;top:533px" width="18" height="15" viewBox="0 0 18 15"><path d="M4.8 1.6 L17.8 1.6 M6.8 7.6 L17.8 7.6 M0.8 13.6 L17.8 13.6" stroke="#1a1a1a" stroke-width="1.5"/><path d="M0.8 5 L4.6 7.6 L0.8 10.2Z" fill="#1a1a1a"/></svg>
<svg class="a" style="left:1134px;top:533px" width="18" height="15" viewBox="0 0 18 15"><path d="M4.8 1.6 L17.8 1.6 M6.8 7.6 L17.8 7.6 M4.8 13.6 L17.8 13.6" stroke="#8f8f8f" stroke-width="1.5"/><path d="M4.6 5 L0.8 7.6 L4.6 10.2Z" fill="#8f8f8f"/></svg>
<svg class="a" style="left:1238px;top:143px" width="10" height="6" viewBox="0 0 10 6"><path d="M0.5 5.5 L5 0.5 L9.5 5.5Z" fill="#b8b8b8"/></svg>
<div class="a" style="left:1238px;top:342px;width:9px;height:366px;background:#b3b3b3;border-radius:5px"></div>
<svg class="a" style="left:1238px;top:924px" width="10" height="6" viewBox="0 0 10 6"><path d="M0.5 0.5 L5 5.5 L9.5 0.5Z" fill="#b8b8b8"/></svg>
</body></html>
